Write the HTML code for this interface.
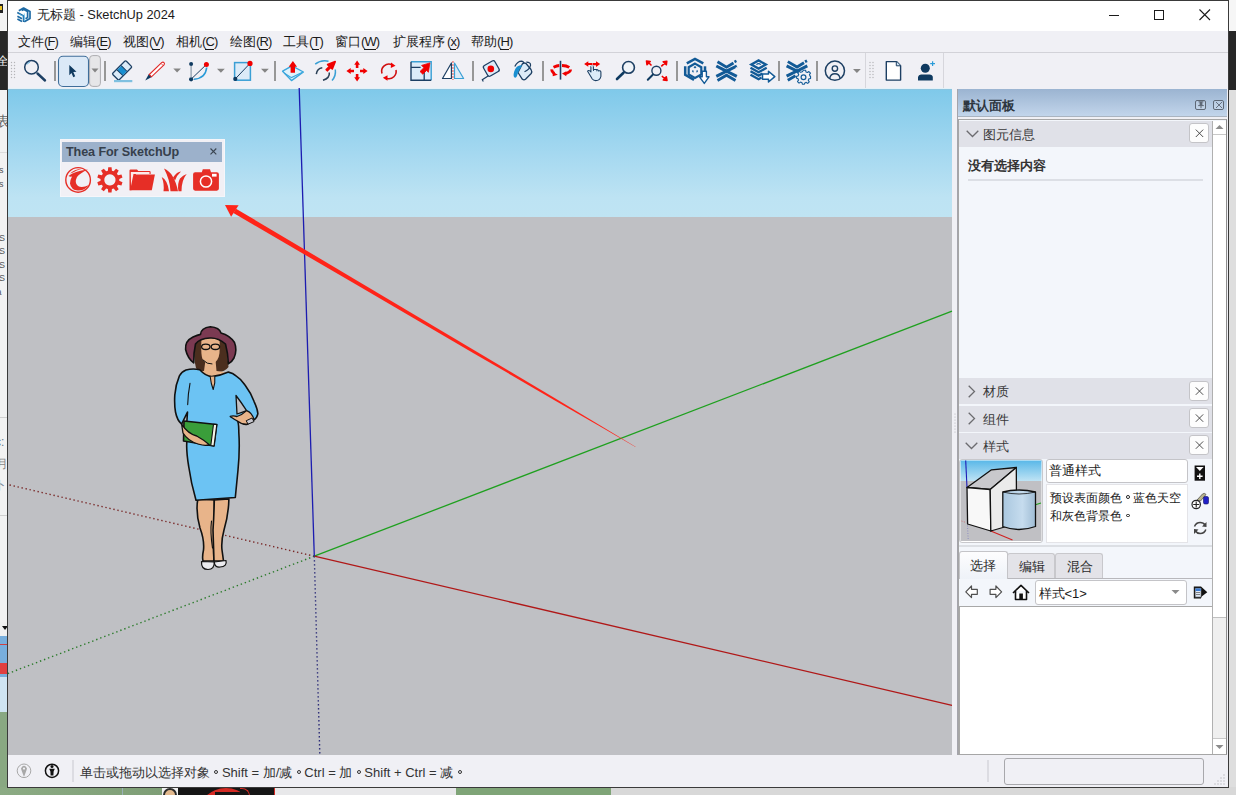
<!DOCTYPE html>
<html><head><meta charset="utf-8">
<style>
*{margin:0;padding:0;box-sizing:border-box}
html,body{width:1236px;height:795px;overflow:hidden;background:#d9d9d9;font-family:"Liberation Sans",sans-serif;color:#000;position:relative}
.a{position:absolute}
.t{position:absolute;white-space:nowrap;line-height:1}
svg{position:absolute;overflow:visible}
.menu{position:absolute;top:34px;font-size:13px;color:#1b1b1b;white-space:nowrap;line-height:15px}
.menu i{font-style:normal;letter-spacing:-0.9px}
.menu u{text-decoration:none;border-bottom:1px solid #1b1b1b}
.o{display:inline-block;width:0.92em;height:1em;position:relative;vertical-align:-0.12em}
.o:after{content:"";position:absolute;left:0.34em;top:0.34em;width:0.31em;height:0.31em;border:1px solid currentColor;border-radius:50%;box-sizing:border-box}
.sep{position:absolute;top:61px;width:2px;height:20px;background:#8c8c8c}
.dd{position:absolute;top:68px;width:0;height:0;border-left:4px solid transparent;border-right:4px solid transparent;border-top:5px solid #8a8a8a}
.hdr{position:absolute;left:959px;width:253px;height:26px;background:#e0e1e8}
.hdr .tx{position:absolute;left:24px;top:7px;font-size:12.7px;color:#383838;line-height:15px}
.cbtn{position:absolute;left:1189px;width:20px;height:20px;background:#fdfdfd;border:1px solid #c4c4c8;border-radius:3px}
</style></head>
<body>
<!-- desktop left strip -->
<div class="a" style="left:0;top:0;width:8px;height:31px;background:#f2f2f2"></div>
<div class="a" style="left:0;top:31px;width:8px;height:59px;background:#272727"></div>
<div class="a" style="left:0;top:90px;width:8px;height:546px;background:#f2f2f2"></div>
<div class="a" style="left:0;top:636px;width:8px;height:41px;background:#78aedc"></div>
<div class="a" style="left:0;top:677px;width:8px;height:35px;background:#cfe4f2"></div>
<div class="a" style="left:0;top:712px;width:8px;height:83px;background:#89a882"></div>
<div class="t" style="left:-3px;top:55px;font-size:12px;color:#f0f0f0">全</div>
<div class="t" style="left:-4px;top:114px;font-size:14px;color:#666">表</div>
<div class="a" style="left:0;top:4px;width:3px;height:9px;background:#222"></div>
<div class="a" style="left:0;top:6px;width:2px;height:4px;background:#e8c020"></div>
<div class="a" style="left:0;top:152px;width:7px;height:1px;background:#dcdcdc"></div>
<div class="t" style="left:-6px;top:164px;font-size:9px;color:#555;line-height:13.5px">es<br>ns<br><br>r.<br>ll<br>3S<br>3S<br>3S<br>3S<br>ta</div>
<div class="a" style="left:0;top:417px;width:7px;height:1px;background:#d0d0d0"></div>
<div class="a" style="left:0;top:515px;width:7px;height:1px;background:#d0d0d0"></div>
<div class="t" style="left:-5px;top:436px;font-size:12px;color:#6a7a8a">c:</div>
<div class="t" style="left:-4px;top:458px;font-size:12px;color:#888">月</div>
<div class="t" style="left:-6px;top:478px;font-size:13px;color:#7a8a9a">ト</div>
<div class="a" style="left:0;top:644px;width:7px;height:1px;background:#d04040"></div>
<div class="a" style="left:0;top:663px;width:7px;height:11px;background:#e04040"></div>
<div class="a" style="left:0;top:622px;width:7px;height:14px;background:#f0f0f0"></div>
<div class="a" style="left:2px;top:626px;width:0;height:0;border-left:3px solid transparent;border-right:3px solid transparent;border-top:4px solid #111"></div>
<div class="a" style="left:1228px;top:5px;width:6px;height:10px;border-left:1px solid #333;border-bottom:1px solid #333"></div>
<div class="t" style="left:1229px;top:58px;font-size:12px;color:#888;transform:rotate(90deg)">组</div>
<!-- desktop right strip -->
<div class="a" style="left:1228px;top:0;width:8px;height:31px;background:#f6f6f6"></div>
<div class="a" style="left:1228px;top:31px;width:8px;height:59px;background:#272727"></div>
<div class="a" style="left:1228px;top:90px;width:8px;height:705px;background:#dedede"></div>
<!-- desktop bottom strip -->
<div class="a" style="left:0;top:787px;width:1236px;height:8px;background:#d8d8d8"></div>
<div class="a" style="left:0;top:787px;width:162px;height:8px;background:linear-gradient(90deg,#8cab84,#7e9e76)"></div>
<div class="a" style="left:122px;top:787px;width:1px;height:8px;background:#9ab0b8"></div>
<div class="a" style="left:162px;top:787px;width:16px;height:8px;background:#f0f0f0"></div>
<div class="a" style="left:163px;top:788px;width:14px;height:12px;background:#e2b98e;border:2px solid #2a2a2a;border-radius:7px 7px 0 0"></div>
<div class="a" style="left:178px;top:787px;width:97px;height:8px;background:#151515"></div>
<div class="a" style="left:197px;top:788px;width:58px;height:30px;border-radius:29px 29px 0 0;background:#d42a24"></div>
<div class="a" style="left:215px;top:792px;width:34px;height:10px;background:#151515;border-radius:0 15px 0 0"></div>
<div class="a" style="left:240px;top:788px;width:10px;height:8px;background:#151515;border-radius:0 10px 0 0;border-right:1.5px solid #d42a24;border-top:1.5px solid #d42a24"></div>
<div class="a" style="left:274px;top:787px;width:2px;height:8px;background:#d42a24"></div>
<div class="a" style="left:275px;top:787px;width:181px;height:8px;background:#e8e8ea"></div>
<div class="a" style="left:456px;top:787px;width:155px;height:8px;background:#7fa477"></div>

<!-- window frame -->
<div class="a" style="left:7px;top:0;width:1222px;height:788px;border:1px solid #3a3a3a;background:#f0f0f5"></div>
<!-- title bar -->
<div class="a" style="left:8px;top:1px;width:1220px;height:30px;background:#fff"></div>
<svg style="left:16px;top:6px" width="16" height="17" viewBox="16 6 16 17">
<g fill="none" stroke="#1e6aa4" stroke-width="1.7" stroke-linejoin="round">
<path d="M18.8 10.8 L23.6 8 L30 11.6 L30 18.4 L24.3 21.8"/>
<path d="M21.6 10.4 L24 9.4 L27.6 11.6 L27.6 17.6 L25.5 18.8"/>
<path d="M17.3 12.6 L23.6 16 L23.6 22"/>
<path d="M17.4 16.3 L22 18.8 M17.4 19 L22 21.4"/>
</g>
<path d="M24.3 13.5 L24.3 21 M18.8 14 L23 16.2" stroke="#6cc4ee" stroke-width="0.9"/>
</svg>
<div class="t" style="left:37px;top:9px;font-size:12.8px;color:#1b1b1b">无标题 - SketchUp 2024</div>
<!-- window controls -->
<div class="a" style="left:1109px;top:15px;width:10px;height:1px;background:#1b1b1b"></div>
<div class="a" style="left:1154px;top:10px;width:10px;height:10px;border:1px solid #1b1b1b"></div>
<svg style="left:1199px;top:9px" width="12" height="12" viewBox="0 0 12 12"><path d="M0.5 0.5 L11 11 M11 0.5 L0.5 11" stroke="#1b1b1b" stroke-width="1.1"/></svg>

<!-- menu bar -->
<div class="a" style="left:8px;top:31px;width:1220px;height:21px;background:#f0f0f5"></div>
<div class="a" style="left:8px;top:51.5px;width:1220px;height:1.5px;background:#d2d2d8"></div>
<div class="menu" style="left:18px">文件<i>(<u>F</u>)</i></div>
<div class="menu" style="left:70px">编辑<i>(<u>E</u>)</i></div>
<div class="menu" style="left:123px">视图<i>(<u>V</u>)</i></div>
<div class="menu" style="left:176px">相机<i>(<u>C</u>)</i></div>
<div class="menu" style="left:230px">绘图<i>(<u>R</u>)</i></div>
<div class="menu" style="left:283px">工具<i>(<u>T</u>)</i></div>
<div class="menu" style="left:335px">窗口<i>(<u>W</u>)</i></div>
<div class="menu" style="left:393px">扩展程序<i style="margin-left:2px">(<u>x</u>)</i></div>
<div class="menu" style="left:471px">帮助<i>(<u>H</u>)</i></div>

<!-- toolbar -->
<svg style="left:0;top:0" width="1236" height="100" viewBox="0 0 1236 100">
<defs>
<g id="dots"><circle cx="0" cy="0" r="0.7"/><circle cx="3" cy="0" r="0.7"/><circle cx="0" cy="3" r="0.7"/><circle cx="3" cy="3" r="0.7"/><circle cx="0" cy="6" r="0.7"/><circle cx="3" cy="6" r="0.7"/><circle cx="0" cy="9" r="0.7"/><circle cx="3" cy="9" r="0.7"/><circle cx="0" cy="12" r="0.7"/><circle cx="3" cy="12" r="0.7"/><circle cx="0" cy="15" r="0.7"/><circle cx="3" cy="15" r="0.7"/></g>
</defs>
<g fill="#b4b4b8"><use href="#dots" x="11.5" y="62.5"/><use href="#dots" x="870" y="62.5"/></g>
<!-- separators -->
<g fill="#979797">
<rect x="54" y="61" width="2" height="20"/><rect x="104" y="61" width="2" height="20"/>
<rect x="274" y="61" width="2" height="20"/><rect x="472" y="61" width="2" height="20"/>
<rect x="542" y="61" width="2" height="20"/><rect x="676" y="61" width="2" height="20"/>
<rect x="778" y="61" width="2" height="20"/><rect x="816" y="61" width="2" height="20"/>
</g>
<rect x="865" y="53" width="1" height="35" fill="#d6d6dc"/>
<rect x="943" y="53" width="1" height="35" fill="#d6d6dc"/>
<!-- dropdown triangles -->
<g fill="#858585">
<path d="M91.5 68.5 L98.5 68.5 L95 72.5 Z"/>
<path d="M173.3 68.6 L180.9 68.6 L177.1 72.6 Z"/>
<path d="M217 68.8 L224.8 68.8 L220.9 72.8 Z"/>
<path d="M261 68.8 L268.8 68.8 L264.9 72.8 Z"/>
<path d="M853 68.9 L860.8 68.9 L856.9 72.9 Z"/>
</g>
<!-- magnifier -->
<circle cx="31.5" cy="67.2" r="6.8" fill="none" stroke="#1d3f63" stroke-width="1.5"/>
<path d="M27 64.5 A5 5 0 0 1 30 62" fill="none" stroke="#5ab0e0" stroke-width="1"/>
<path d="M37.5 73.5 L45 80.5" stroke="#1d3f63" stroke-width="2.4" stroke-linecap="round"/>
<!-- select button -->
<rect x="58.5" y="56.3" width="30" height="30.2" rx="4.5" fill="#dbe9f7" stroke="#3f6e9a" stroke-width="1.1"/>
<rect x="89.6" y="55.6" width="10.8" height="30.8" rx="3.2" fill="#e6e6e8" stroke="#adadb0" stroke-width="1"/>
<path d="M91.5 68.5 L98.5 68.5 L95 72.5 Z" fill="#858585"/>
<path d="M69.3 65 L76.5 71.8 L73.3 72.1 L75.2 76.3 L73.3 77.2 L71.5 73.1 L69.3 75.3 Z" fill="#0f3a60"/>
<!-- eraser -->
<g transform="translate(122.1 70.4) rotate(45)">
<rect x="-4.6" y="-9.5" width="9.2" height="19" rx="1.2" fill="#dcebf8" stroke="#1d3f63" stroke-width="1.3"/>
<rect x="-3.9" y="-2.8" width="7.8" height="6" fill="#1a8fd0"/>
<path d="M-4 -2.8 L4 -2.8 M-4 3.2 L4 3.2" stroke="#1d3f63" stroke-width="1"/>
</g>
<rect x="114" y="80" width="18.3" height="2.2" fill="#7fc0e0"/>
<!-- pencil -->
<path d="M145.2 80.6 L148.9 74 L151.8 76.9 Z" fill="#0f3a60"/>
<path d="M149.3 74.5 L161.6 62.6 Q163 61.6 164 62.6 Q165 63.6 164 65 L151.5 76.8 Z" fill="#fff" stroke="#e02828" stroke-width="1.1"/>
<path d="M161 63.4 L163.2 65.6" stroke="#e02828" stroke-width="0.8"/>
<!-- arc tool -->
<path d="M191.1 66 L191.1 77" stroke="#8898aa" stroke-width="1.2"/>
<path d="M191.1 79.2 L206.4 64.5" stroke="#1d3f63" stroke-width="1"/>
<path d="M194 79.2 Q205.5 78.5 206.7 67.5" fill="none" stroke="#2a9bd8" stroke-width="1.6"/>
<circle cx="191.1" cy="63.9" r="2" fill="#0f3a60"/>
<circle cx="191.1" cy="79.3" r="2.1" fill="#0f3a60"/>
<circle cx="206.4" cy="64.5" r="2.5" fill="#f00000"/>
<!-- rectangle tool -->
<rect x="234.6" y="62.6" width="15.8" height="17.6" fill="#dcebf8" stroke="#3a9fd5" stroke-width="1.5"/>
<path d="M235.3 78.9 L250 63.4" stroke="#1d3f63" stroke-width="1"/>
<circle cx="235.3" cy="78.9" r="2.1" fill="#0f3a60"/>
<circle cx="250" cy="63.4" r="2.6" fill="#f00000"/>
<!-- push pull -->
<path d="M282.6 71.2 L292 65.8 L303.4 72 L291.5 80.6 Z" fill="#dff2fc" stroke="#3aa6dc" stroke-width="1.4" stroke-linejoin="round"/>
<path d="M284.4 73.2 L291.5 77.6 L302 72.6" fill="none" stroke="#3aa6dc" stroke-width="1.1"/>
<path d="M290.6 72.7 L290.6 66.8 L288.7 66.8 L292.9 61 L297 66.8 L295 66.8 L295 72.7 Z" fill="#f00000"/>
<!-- follow me -->
<path d="M315.2 64.2 Q321 59.5 328.5 61.2" fill="none" stroke="#3aa0d5" stroke-width="1.5"/>
<path d="M335.3 69.5 Q336.2 76 332 80.4" fill="none" stroke="#3aa0d5" stroke-width="1.5"/>
<path d="M316.3 74.1 Q317 68.5 322.3 67.8" fill="none" stroke="#2a3f55" stroke-width="1.5"/>
<path d="M329.3 72.5 Q330 78 323 80.3" fill="none" stroke="#2a3f55" stroke-width="1.5"/>
<path d="M326.2 69.6 L329.6 66.4 L327.6 64.6 L335.2 61.6 L332.3 69 L330.6 67.4 L327.4 70.8 Z" fill="#f00000" stroke="#f00000" stroke-width="1.6" stroke-linejoin="round"/>
<!-- move -->
<g fill="#f00000">
<path d="M357.1 60.4 L360 64.7 L358.4 64.7 L358.4 68 L355.8 68 L355.8 64.7 L354.2 64.7 Z"/>
<path d="M357.1 81.6 L360 77.3 L358.4 77.3 L358.4 74 L355.8 74 L355.8 77.3 L354.2 77.3 Z"/>
<path d="M346.4 71 L350.7 68.1 L350.7 69.7 L354 69.7 L354 72.3 L350.7 72.3 L350.7 73.9 Z"/>
<path d="M367.6 71 L363.3 68.1 L363.3 69.7 L360 69.7 L360 72.3 L363.3 72.3 L363.3 73.9 Z"/>
</g>
<!-- rotate -->
<path d="M382 73.5 A7.3 7.3 0 0 1 392 64.7" fill="none" stroke="#d01010" stroke-width="1.6"/>
<path d="M396 70 A7.3 7.3 0 0 1 387 78.5" fill="none" stroke="#d01010" stroke-width="1.6"/>
<path d="M391 62.5 L395.5 65.7 L390.8 68 Z" fill="#f00000"/>
<path d="M387.5 75.3 L382.9 77.7 L387.5 80.7 Z" fill="#f00000"/>
<!-- scale -->
<rect x="411" y="61.7" width="20.2" height="18.5" fill="#dcebf8"/>
<path d="M411 61.7 L431.2 61.7 L431.2 80.2" fill="none" stroke="#3aa0d5" stroke-width="1.4"/>
<path d="M411 61.7 L411 80.2 L431.2 80.2" fill="none" stroke="#1d3f63" stroke-width="1.4"/>
<path d="M411 67.4 L420.6 67.4 M424.2 71.5 L424.2 80.2" fill="none" stroke="#1d3f63" stroke-width="1.3"/>
<path d="M429.9 62.9 L421.6 65.4 L423.9 67.7 L420 71.5 L422.8 74.2 L426.6 70.4 L428.4 72.3 Z" fill="#f00000" stroke="#f00000" stroke-width="0.8" stroke-linejoin="round"/>
<!-- flip -->
<path d="M442.5 78.5 L451.4 63 L451.4 78.5 Z" fill="#fff" stroke="#1d3f63" stroke-width="1.2" stroke-linejoin="round"/>
<path d="M454.5 63 L463.6 78.5 L454.5 78.5 Z" fill="#dcebf8" stroke="#3aa0d5" stroke-width="1.2" stroke-linejoin="round"/>
<path d="M452.9 61 L452.9 80" stroke="#e89494" stroke-width="1.8" stroke-dasharray="2 1"/>
<!-- tape -->
<g transform="translate(491.3 68.5) rotate(-30)">
<rect x="-6.5" y="-6" width="13" height="12" rx="2" fill="#dcebf8" stroke="#1d3f63" stroke-width="1.3"/>
</g>
<circle cx="490.8" cy="68.9" r="3.3" fill="#f00000"/>
<path d="M488.5 75.8 L482.3 79.7 L483.3 81.5" fill="none" stroke="#1d3f63" stroke-width="1.2"/>
<!-- paint bucket -->
<path d="M518 72.5 L522.3 64 Q524 62.3 526 63.5 L531 69.5 Q532.5 71.8 531.2 73.5 L525.5 79.3 Q524 80.6 522.4 79.3 Z" fill="#dcebf8" stroke="#1d3f63" stroke-width="1.3" stroke-linejoin="round"/>
<path d="M514.8 66.5 Q517.5 61.2 521.7 61.2 Q524.3 61.6 523.3 63.8" fill="none" stroke="#1d3f63" stroke-width="1.3"/>
<path d="M524.5 71.8 Q529.5 69.8 530.6 65.2 Q530.6 62.2 526.3 62.2" fill="none" stroke="#1d3f63" stroke-width="1.2"/>
<path d="M522.3 65.4 Q516.5 64.5 514.2 71.5 Q512.8 76.5 514.6 77.6 Q516.6 78.3 517.8 73.5 Q519.5 68.5 522.3 65.4 Z" fill="#1a8fd0"/>
<!-- orbit -->
<path d="M553.5 67.3 Q557 65.6 559.3 65.5 M562 65.5 Q566.5 65.6 569.3 67.4" fill="none" stroke="#f00000" stroke-width="2.8"/>
<path d="M551.8 69.4 Q551.6 72 554.5 73.4" fill="none" stroke="#f00000" stroke-width="2.8"/>
<path d="M570.6 69.6 Q570.6 72.3 565 73.8" fill="none" stroke="#f00000" stroke-width="2.8"/>
<path d="M552.5 71.5 L557.8 74.8 L552.8 76.3 Z" fill="#f00000"/>
<path d="M566.3 71.3 L562 73.6 L566.3 76.3 Z" fill="#f00000"/>
<path d="M560.5 60.8 L560.5 79.6" stroke="#1d3f63" stroke-width="1.6"/>
<!-- pan -->
<path d="M584.1 64 L588.3 61.2 L588.3 62.9 L592.2 62.9 L592.2 65.1 L588.3 65.1 L588.3 66.8 Z" fill="#f00000"/>
<path d="M600.2 64.1 L596 61.3 L596 63 L592.6 63 L592.6 65.2 L596 65.2 L596 66.9 Z" fill="#f00000"/>
<path d="M590.9 66.3 L590.9 72 L589.9 70.9 Q588.3 69.9 587.6 71.2 L592.3 79 Q593.5 80.6 595.6 80.6 Q600 80.6 600.9 76.5 L600.9 71.8 Q600.5 70.6 599.4 70.8 L598.4 70.9 Q598 69.4 596.8 69.5 L593.4 69.5 L593.4 66.3 Z" fill="#dcebf8" stroke="#1d3f63" stroke-width="1.1" stroke-linejoin="round"/>
<path d="M590.9 66.3 L593.4 66.3" stroke="#dcebf8" stroke-width="1"/>
<path d="M593.5 69.5 L593.5 71 M596.8 69.6 L596.8 71.3" stroke="#1d3f63" stroke-width="0.9"/>
<!-- zoom -->
<circle cx="628.5" cy="67.4" r="5.9" fill="#f0f4f8" stroke="#1d3f63" stroke-width="1.6"/>
<path d="M623.5 72.7 L617 79" stroke="#0f3a60" stroke-width="2.6" stroke-linecap="round"/>
<!-- zoom extents -->
<circle cx="656.4" cy="70.8" r="4.5" fill="none" stroke="#1d3f63" stroke-width="1.4"/>
<path d="M653 74.5 L647.8 79.7" stroke="#0f3a60" stroke-width="2" stroke-linecap="round"/>
<g fill="#f00000" stroke="#f00000" stroke-width="1.6" stroke-linejoin="round">
<path d="M651.5 65.5 L648.5 62.5 M646.5 61 L650.2 61.5 L647 64.7 Z"/>
<path d="M661.3 66.4 L664.5 63.4 M666.8 61.2 L663.2 61.7 L666.3 64.8 Z"/>
<path d="M661.9 76 L665 79 M667 80.5 L666.3 76.9 L663.3 80 Z"/>
</g>
<!-- 3D warehouse -->
<g fill="none" stroke="#125a96" stroke-width="2.5" stroke-linejoin="miter">
<path d="M686.8 63.3 L695 58.8 L703.3 63.3"/>
<path d="M685.2 66.3 L685.2 74.8 L694 79.8"/>
<path d="M705 66.3 L705 71.5"/>
</g>
<path d="M695 63.6 L701.3 67.2 L701.3 74.4 L695 78 L688.7 74.4 L688.7 67.2 Z" fill="none" stroke="#125a96" stroke-width="2.2"/>
<g fill="#125a96"><path d="M695 66 L696.5 67.2 L695 68.4 L693.5 67.2 Z"/><path d="M692.2 70.2 L693.6 70.6 L693.6 72.4 L692.2 72 Z"/><path d="M697.8 70.2 L696.4 70.6 L696.4 72.4 L697.8 72 Z"/></g>
<path d="M702.2 71.3 L706.4 71.3 L706.4 76.8 L709 76.8 L704.3 83.4 L699.5 76.8 L702.2 76.8 Z" fill="#fff" stroke="#125a96" stroke-width="1.4" stroke-linejoin="round"/>
<!-- extension warehouse -->
<g fill="none" stroke="#125a96" stroke-linejoin="miter">
<path d="M717.5 61.8 L726.5 67.2 L733.5 63" stroke-width="2.8"/>
<path d="M734.5 62 L736.5 61" stroke-width="2.8"/>
<path d="M716.3 66 L726.5 71.2 L736.8 66" stroke-width="3"/>
<path d="M716.3 76.4 L726.5 71.2 L736.8 76.4" stroke-width="3"/>
<path d="M717.5 80.5 L726.5 75.2 L735.5 80.5" stroke-width="2.8"/>
</g>
<path d="M734.8 63.8 L737 62.5 M735.5 68 L737 67.2" stroke="#f0f0f5" stroke-width="0.8"/>
<!-- layout -->
<g fill="none" stroke="#125a96" stroke-width="2.3" stroke-linejoin="miter">
<path d="M751.3 64.6 L758.6 60.4 L765.9 64.6 L758.6 68.6 Z"/>
<path d="M750.5 67.8 L758.6 72.2 L766.7 67.8"/>
<path d="M750.5 71.3 L758.6 75.6 L762.5 73.6"/>
<path d="M750.5 74.8 L758.6 79.2 L761.5 77.6"/>
</g>
<path d="M756.4 64.6 Q758.6 62.6 760.8 64.6" fill="none" stroke="#125a96" stroke-width="1.2"/>
<path d="M762.5 74 L768.5 74 L768.5 71.2 L774.8 76.6 L768.5 82 L768.5 79.2 L762.5 79.2 Z" fill="#fff" stroke="#125a96" stroke-width="1.5" stroke-linejoin="round"/>
<!-- extension manager -->
<g fill="none" stroke="#125a96" stroke-linejoin="miter">
<path d="M787.8 61.6 L797 67 L804 62.8" stroke-width="2.8"/>
<path d="M805 61.8 L807 60.8" stroke-width="2.8"/>
<path d="M786.6 65.8 L797 71 L807.3 65.8" stroke-width="3"/>
<path d="M786.6 76.2 L797 71 L799.5 72.3" stroke-width="3"/>
<path d="M787.8 80.3 L795.5 75.8" stroke-width="2.8"/>
</g>
<g transform="translate(803.5 77.3)">
<path d="M-1.2 -6.6 L1.2 -6.6 L1.6 -4.7 L3.2 -4.1 L4.8 -5.2 L6.5 -3.5 L5.4 -1.9 L6 -0.3 L6.6 0.2 L6.6 2.4 L4.7 2.8 L4.1 4.4 L5.2 6 L3.5 7.7 L1.9 6.6 L0.3 7.2 L-0.1 8.6 L-2.3 8.6 L-2.7 6.9 L-4.3 6.3 L-5.9 7.4 L-7.6 5.7 L-6.5 4.1 L-7.1 2.5 L-8.6 2.1 L-8.6 -0.1 L-6.9 -0.5 L-6.3 -2.1 L-7.4 -3.7 L-5.7 -5.4 L-4.1 -4.3 L-2.5 -4.9 Z" transform="translate(1 -1) scale(0.92)" fill="#f0f0f5" stroke="#125a96" stroke-width="1.2" stroke-linejoin="round"/>
<circle cx="0" cy="0" r="2.4" fill="none" stroke="#125a96" stroke-width="1.2"/>
</g>
<!-- profile -->
<circle cx="834.9" cy="70.7" r="9.6" fill="none" stroke="#1d3f63" stroke-width="1.5"/>
<circle cx="834.9" cy="68.6" r="2.7" fill="none" stroke="#1d3f63" stroke-width="1.4"/>
<path d="M829.7 78.5 Q830.5 73.8 834.9 73.8 Q839.3 73.8 840.1 78.5" fill="none" stroke="#1d3f63" stroke-width="1.4"/>
<!-- doc -->
<path d="M886.3 61.6 L896.5 61.6 L900.6 65.7 L900.6 80.1 L886.3 80.1 Z" fill="#fff" stroke="#1d3f63" stroke-width="1.4" stroke-linejoin="round"/>
<path d="M896.3 61.6 L896.3 65.8 L900.6 65.8" fill="#cfe3f3" stroke="#1d3f63" stroke-width="1"/>
<!-- add person -->
<circle cx="925.3" cy="68.3" r="4.5" fill="#0f3a60"/>
<path d="M918 80.5 L918 77 Q918.5 74.4 921 74.4 L929.5 74.4 Q932.5 74.4 932.8 77 L932.8 80.5 Z" fill="#0f3a60"/>
<path d="M932.6 61.3 L932.6 66.1 M930.2 63.7 L935 63.7" stroke="#2a9bd8" stroke-width="1.2"/>
</svg>


<!-- viewport -->
<div class="a" style="left:8px;top:88px;width:944px;height:667px;background:#bfc0c4;overflow:hidden">
  <div class="a" style="left:0;top:0;width:944px;height:129px;background:linear-gradient(#7fc9ea 1%,#a4d8f0 50%,#bde3f3 85%,#bfe4f3)"></div>
  <div class="a" style="left:0;top:0;width:944px;height:1px;background:#e4f1f8"></div>
  <div class="a" style="left:0;top:1px;width:944px;height:1px;background:#8cc4de"></div>
</div>
<svg style="left:8px;top:88px" width="944" height="667" viewBox="8 88 944 667">
<!-- dotted axes -->
<path d="M314.3 556.2 L8 484.6" stroke="#7a2a2a" stroke-width="1.4" stroke-dasharray="1.4 2.7"/>
<path d="M314.3 556.2 L8 673.5" stroke="#2a7a2a" stroke-width="1.4" stroke-dasharray="1.4 2.9"/>
<path d="M314.3 556.2 L319.8 755" stroke="#1c1c70" stroke-width="1.4" stroke-dasharray="1.3 2.7"/>
<!-- solid axes -->
<path d="M314.3 556.2 L952 311.2" stroke="#1fa01f" stroke-width="1.3"/>
<path d="M314.3 556.2 L952 705.3" stroke="#b01818" stroke-width="1.3"/>
<path d="M314.3 556.2 L299.2 88" stroke="#1c1cb0" stroke-width="1.3"/>
<!-- red arrow -->
<path d="M233.43 213.00 L353.93 283.36 L474.44 353.67 L554.88 400.39 L603.21 428.31 L635.45 446.89 L635.55 446.71 L603.66 427.54 L555.80 398.83 L475.92 351.17 L355.95 279.91 L235.97 208.70 Z" fill="#ff2419"/>
<path d="M225 205.1 L238.6 205.2 L231.1 216.7 Z" fill="#ff2419"/>
</svg>

<!-- Thea toolbar -->
<div class="a" style="left:60px;top:139px;width:165px;height:58px;background:#f1f0f5;border:1px solid #f6f6fa"></div>
<div class="a" style="left:62px;top:142px;width:160px;height:20px;background:#9cb1cb"></div>
<div class="t" style="left:66px;top:145.5px;font-size:12.6px;font-weight:bold;color:#36404c;letter-spacing:-0.1px">Thea For SketchUp</div>
<svg style="left:0;top:0" width="240" height="200" viewBox="0 0 240 200">
<path d="M210.5 148.5 L216.3 154.3 M216.3 148.5 L210.5 154.3" stroke="#3a4450" stroke-width="1.1"/>
<g fill="#e62e26">
<circle cx="78.1" cy="179.9" r="12.3" fill="none" stroke="#e62e26" stroke-width="1.4"/>
<path d="M68.5 176 Q74 171 88 169.5 Q80 173 77 177 Q74 183 78 186 Q82 188.5 89 185 Q85 190.5 78 190.5 Q71 190 70 183.5 Q70 180 72 176.5 Q70 177 68.5 176 Z"/>
<path d="M70 173.5 Q74 169.5 82 168.8 Q76 170.3 73 172.5 Z" />
</g>
<g transform="translate(109.9 179.9)" fill="#e62e26"><path d="M-2.03 -9.18 L-1.67 -12.69 L1.67 -12.69 L2.03 -9.18 L3.75 -8.62 L6.11 -11.25 L8.81 -9.28 L7.04 -6.23 L8.10 -4.77 L11.55 -5.51 L12.59 -2.33 L9.36 -0.90 L9.36 0.90 L12.59 2.33 L11.55 5.51 L8.10 4.77 L7.04 6.23 L8.81 9.28 L6.11 11.25 L3.75 8.62 L2.03 9.18 L1.67 12.69 L-1.67 12.69 L-2.03 9.18 L-3.75 8.62 L-6.11 11.25 L-8.81 9.28 L-7.04 6.23 L-8.10 4.77 L-11.55 5.51 L-12.59 2.33 L-9.36 0.90 L-9.36 -0.90 L-12.59 -2.33 L-11.55 -5.51 L-8.10 -4.77 L-7.04 -6.23 L-8.81 -9.28 L-6.11 -11.25 L-3.75 -8.62 Z M0 -5.6 A5.6 5.6 0 1 0 0.01 -5.6 Z" fill-rule="evenodd"/></g>
<g fill="#e62e26">
<path d="M129.5 170.5 Q129.5 169.4 130.6 169.4 L137 169.4 L138.3 171 L149.5 171 Q150.6 171 150.6 172.1 L150.6 174 L136 174 L131.5 190.3 L129.5 190.3 Z"/>
<path d="M133.2 174.6 L154.9 174.6 L151.8 190.3 L129.8 190.3 Z"/>
<path d="M130.8 172 L149.5 172 L149.5 174 L133.5 174 L131 186 Z" fill="#fff" opacity="0.9"/>
</g>
<g fill="#e62e26">
<path d="M164 168.6 Q174 172.5 178 191.2 L170.5 191.2 Q170 180 164 168.6 Z"/>
<path d="M161.7 177 Q167.5 180 169 191.2 L163.5 191.2 Q164.5 184 161.7 177 Z"/>
<path d="M173 177.5 Q177 171.5 181 171.5 Q177 175 175 180.5 Z"/>
<path d="M186.7 174 Q181.5 180 181.5 191.2 L178.5 191.2 Q177 184 180 178.5 Q183 175 186.7 174 Z"/>
</g>
<g>
<path d="M195.2 172.2 L201.8 172.2 L202.8 169.2 L210 169.2 L211 172.2 L216.8 172.2 Q218.9 172.2 218.9 174.3 L218.9 188.6 Q218.9 190.7 216.8 190.7 L195.2 190.7 Q193.1 190.7 193.1 188.6 L193.1 174.3 Q193.1 172.2 195.2 172.2 Z" fill="#e62e26"/>
<circle cx="206" cy="181.5" r="5.6" fill="none" stroke="#fff" stroke-width="1.5"/>
<rect x="212" y="173.8" width="4.6" height="2.8" fill="#fff"/>
</g>
</svg>

<!-- woman figure -->
<svg style="left:160px;top:320px" width="110" height="260" viewBox="160 320 110 260">
<g stroke="#111" stroke-width="1.6" stroke-linejoin="round" stroke-linecap="round">
<!-- legs -->
<path d="M197.8 499 Q195.5 512 200 528 Q204.5 540 203.5 550 Q202 557 203 561 L214 561 Q213 548 214 530 Q214.5 515 214.3 500 Z" fill="#e8b48a"/>
<path d="M214.3 500 L228.9 499 Q228.5 515 224 530 Q221 541 222 550 Q223 557 223.5 561 L214 561 Q213.5 545 213 530 Q214 515 214.3 500 Z" fill="#e8b48a"/>
<path d="M211.5 521 Q210 532 212.5 548" fill="none" stroke-width="1.1"/>
<path d="M201.5 561.5 Q201 569.5 208 569.5 Q214.5 569.5 214.3 562 Z" fill="#ebebef" stroke-width="1.2"/>
<path d="M214.3 562 Q214.5 567.5 220 567 Q227.5 566.5 226 560.5 Z" fill="#ebebef" stroke-width="1.2"/>
<!-- hair -->
<path d="M195 338 Q193 358 196 368 Q199 372.5 205 372 L216 372 Q224 373 228.5 367 Q227 354 226 338 Z" fill="#4b2e1e" stroke="none"/>
<!-- neck -->
<path d="M205.5 360 L204 371 Q199 371 198 372 Q206 378 212 378 Q222 377 229 373 Q220 371 216.5 371 L215.5 360 Z" fill="#e8b48a" stroke="none"/>
<!-- dress -->
<path d="M199.7 369.8 Q206 376.5 211.8 376.6 Q220 376 228.4 372.1 Q233 373 236 375.9 Q241 379 245 385 Q251 393 254.1 401.6 Q257.5 409 257.9 413.7 Q257 418 254.1 419.7 L247.3 424.2 Q244 425.5 240 421 Q238 419 236 418 Q239 421 238.8 432 Q240 450 238 470 Q236.5 485 235.3 497.5 L196 500.3 Q191 483 188.7 466.5 Q186 450 186.9 441 Q186 430 187.5 412 L181.6 424.2 Q177 420 175.5 412 Q174.2 404.6 174.8 395 Q175.5 385 179.4 375.9 Q182 371.5 186 370 Q193 368 199.7 369.8 Z" fill="#6cc3f3"/>
<path d="M236 395.5 Q241 402 246.6 410.6 Q242 412.5 237 414 Z" fill="#bfc0c4" stroke-width="1.3"/>
<path d="M190 383.4 Q188 394 187.7 404.6" fill="none" stroke-width="1.1"/>
<path d="M210.2 376.8 Q211 384 213.2 389.5 Q215.5 383 214.8 376.5" fill="#e8b48a" stroke-width="1.1"/>
<!-- face -->
<path d="M201.5 338 Q200.5 356 203 360 Q207 364.5 212 364 Q218.5 362 219.5 353 Q220 346 219.5 338 Z" fill="#e8b48a" stroke="none"/>
<path d="M203 360 Q207 364.5 212 364" fill="none" stroke-width="1"/>
<!-- glasses -->
<ellipse cx="205.8" cy="346.8" rx="4.2" ry="2.7" fill="#e8b48a" stroke-width="1.3"/>
<ellipse cx="215.4" cy="346.8" rx="4.2" ry="2.7" fill="#e8b48a" stroke-width="1.3"/>
<!-- hat -->
<path d="M185.6 349.5 Q184.8 341 193 337 Q197.5 335 200.5 334.4 Q201 328 210.3 326.8 Q219.5 327.5 221 333 Q230 335.5 234.5 342.5 Q237.5 350 234 358 Q231.5 362.5 228.4 363.8 Q228 353 225.5 344 Q218 337.5 210 338 Q199.5 338.5 195.5 344 Q193.5 353 193.7 363 Q187.5 358 185.6 349.5 Z" fill="#7b3a52"/>
<!-- book -->
<path d="M184 421 L216.8 424.5 L214 446 L183.5 441 Z" fill="#3a9e3a"/>
<path d="M213.5 424.3 L216.8 424.5 L214 446 L210.8 445.5 Z" fill="#f4f4e8" stroke-width="1.1"/>
<!-- hands -->
<path d="M181.6 424.2 Q188 434 196.7 436 Q204 440 209 444.6 Q206 446.5 198 444 Q188 441 183 433 Z" fill="#e8b48a" stroke-width="1.3"/>
<path d="M247.3 424.2 Q242 424.8 236.5 420.5 Q231.5 417.5 230.2 416.4 Q233 415.5 237 416.5 Q242 415 246.6 410.6 Q252 412.5 254.1 419.7 Z" fill="#e8b48a" stroke-width="1.3"/>
<path d="M246.5 420.6 L252 418 L254 421.6 L248.5 424 Z" fill="#c8c8d0" stroke-width="1"/>
</g>
</svg>


<!-- panel -->
<svg style="left:953px;top:412px" width="4" height="22" viewBox="0 0 4 22"><g fill="#b0b0b8"><circle cx="2" cy="2" r="0.6"/><circle cx="2" cy="5" r="0.6"/><circle cx="2" cy="8" r="0.6"/><circle cx="2" cy="11" r="0.6"/><circle cx="2" cy="14" r="0.6"/><circle cx="2" cy="17" r="0.6"/><circle cx="2" cy="20" r="0.6"/></g></svg>

<!-- panel -->
<div class="a" style="left:957px;top:89px;width:271px;height:666px;background:#f0f0f5;border-left:1px solid #a4a4ac"></div>
<div class="a" style="left:958px;top:89px;width:269px;height:28px;background:linear-gradient(#9bb4d1,#c2d5eb);border-bottom:1px solid #aab4c0"></div>
<div class="t" style="left:963px;top:98.7px;font-size:13.4px;font-weight:bold;color:#2e3640">默认面板</div>
<div class="a" style="left:1195px;top:99.5px;width:11px;height:10.5px;border:1px solid #5e6876;border-radius:2px;background:rgba(255,255,255,0.15)"></div>
<svg style="left:1195px;top:99px" width="12" height="12" viewBox="0 0 12 12"><path d="M3.5 2.8 L8.5 2.8 M3.2 6.6 L8.8 6.6 M6 6.6 L6 9.2" stroke="#5e6876" stroke-width="1"/><rect x="4.6" y="3" width="2.8" height="3.4" fill="#5e6876"/></svg>
<div class="a" style="left:1213px;top:99.5px;width:11px;height:10.5px;border:1px solid #5e6876;border-radius:2px;background:rgba(255,255,255,0.15)"></div>
<svg style="left:1213px;top:99px" width="12" height="12" viewBox="0 0 12 12"><path d="M3 3 L9 9 M9 3 L3 9" stroke="#5e6876" stroke-width="0.9"/></svg>
<!-- tray body -->
<div class="a" style="left:958px;top:119px;width:269px;height:636px;background:#f3f6fb;border:1px solid #a6a6a6;border-right-color:#8e8e8e"></div>
<!-- scrollbar -->
<div class="a" style="left:1212px;top:121px;width:14px;height:633px;background:#fff;border-left:1px solid #b0b0b0"></div>
<div class="a" style="left:1213px;top:617px;width:13px;height:122px;background:#efefef;border-top:1px solid #c0c0c0"></div>
<div class="a" style="left:1213px;top:134px;width:13px;height:1px;background:#c8c8c8"></div>
<div class="a" style="left:1213px;top:738px;width:13px;height:1px;background:#c8c8c8"></div>
<svg style="left:1213px;top:121px" width="13" height="13" viewBox="0 0 13 13"><path d="M2.5 8 L10.5 8 L6.5 4 Z" fill="#8c8c8c"/></svg>
<svg style="left:1213px;top:740px" width="13" height="13" viewBox="0 0 13 13"><path d="M2.5 5 L10.5 5 L6.5 9 Z" fill="#8c8c8c"/></svg>
<!-- section headers -->
<div class="hdr" style="top:121px;height:26px"><svg style="left:7px;top:9px" width="13" height="8" viewBox="0 0 13 8"><path d="M0.7 0.7 L6.5 6.5 L12.3 0.7" fill="none" stroke="#6c6c70" stroke-width="1.3"/></svg><div class="tx">图元信息</div></div>
<div class="cbtn" style="top:123px"></div>
<div class="t" style="left:968px;top:158.8px;font-size:13.4px;font-weight:bold;color:#333">没有选择内容</div>
<div class="a" style="left:968px;top:179px;width:235px;height:2px;background:#dcdfe5"></div>

<div class="hdr" style="top:378px"><svg style="left:8.5px;top:6.5px" width="8" height="13" viewBox="0 0 8 13"><path d="M0.7 0.7 L6.5 6.5 L0.7 12.3" fill="none" stroke="#6c6c70" stroke-width="1.3"/></svg><div class="tx">材质</div></div>
<div class="cbtn" style="top:381px"></div>
<div class="hdr" style="top:405.5px"><svg style="left:8.5px;top:6.5px" width="8" height="13" viewBox="0 0 8 13"><path d="M0.7 0.7 L6.5 6.5 L0.7 12.3" fill="none" stroke="#6c6c70" stroke-width="1.3"/></svg><div class="tx">组件</div></div>
<div class="cbtn" style="top:408px"></div>
<div class="hdr" style="top:432.5px"><svg style="left:6px;top:9px" width="13" height="8" viewBox="0 0 13 8"><path d="M0.7 0.7 L6.5 6.5 L12.3 0.7" fill="none" stroke="#6c6c70" stroke-width="1.3"/></svg><div class="tx">样式</div></div>
<div class="cbtn" style="top:435px"></div>
<svg style="left:1189px;top:120px" width="22" height="340" viewBox="0 0 22 340">
<g stroke="#3a3a3a" stroke-width="0.9"><path d="M6.8 9.6 L14.2 17 M14.2 9.6 L6.8 17"/>
<path d="M6.8 267.4 L14.2 274.8 M14.2 267.4 L6.8 274.8"/>
<path d="M6.8 294.4 L14.2 301.8 M14.2 294.4 L6.8 301.8"/>
<path d="M6.8 321.4 L14.2 328.8 M14.2 321.4 L6.8 328.8"/></g>
</svg>
<!-- style content -->
<div class="a" style="left:959px;top:458.5px;width:84px;height:84px;border:1px solid #c8c8cc;border-radius:3px;background:#fff"></div>
<svg style="left:960px;top:459.5px" width="82" height="82" viewBox="960 459.5 82 82">
<defs><linearGradient id="tsky" x1="0" y1="0" x2="0" y2="1"><stop offset="0" stop-color="#5ab8e8"/><stop offset="1" stop-color="#bfe3f4"/></linearGradient>
<linearGradient id="tcyl" x1="0" y1="0" x2="1" y2="0"><stop offset="0" stop-color="#a9c7df"/><stop offset="0.6" stop-color="#c6dcee"/><stop offset="1" stop-color="#9fbcd4"/></linearGradient></defs>
<rect x="960.5" y="460" width="81" height="20.5" fill="url(#tsky)"/>
<rect x="960.5" y="480.5" width="81" height="60" fill="#c0c0c4"/>
<path d="M965.7 460 L967 487" stroke="#1c1cb8" stroke-width="1.1"/>
<path d="M961.5 520.5 L966 522" stroke="#d06060" stroke-width="0.8" stroke-dasharray="1 1.5"/>
<path d="M967.5 525 L968.2 539" stroke="#8080c0" stroke-width="0.8" stroke-dasharray="1 1.5"/>
<path d="M990.8 530.5 L1012.5 539.5" stroke="#d02020" stroke-width="1.1"/>
<path d="M1035.5 504.2 L1041 502.5" stroke="#20a020" stroke-width="1.1"/>
<g stroke="#111" stroke-width="1.3" stroke-linejoin="round">
<path d="M967 487 L991.5 469.3 L1016.3 467 L990.2 489 Z" fill="#c8c8cc"/>
<path d="M967 487 L990.2 489 L990.8 530.5 L967.6 523.5 Z" fill="#f8f8f8"/>
<path d="M990.2 489 L1016.3 467 L1016.6 523 L990.8 530.5 Z" fill="#ebebeb"/>
<path d="M1002.8 491.5 Q1019 487.5 1035.5 491.5 L1035.5 526 Q1019 532 1002.8 526 Z" fill="url(#tcyl)"/>
<path d="M1002.8 491.5 Q1019 495.5 1035.5 491.5" fill="none" stroke-width="0.8"/>
</g>
</svg>

<div class="a" style="left:1046px;top:458.5px;width:142px;height:24px;background:#fff;border:1px solid #c4c4c8;border-radius:3px"></div>
<div class="t" style="left:1049px;top:463.5px;font-size:13px;color:#1a1a1a">普通样式</div>
<div class="a" style="left:1046px;top:483.5px;width:142px;height:59px;background:#fff;border:1px solid #e4e4e8"></div>
<div class="t" style="left:1050px;top:488.5px;font-size:12.2px;color:#1a1a1a;line-height:18.8px">预设表面颜色<b class="o"></b>蓝色天空<br>和灰色背景色<b class="o"></b></div>
<div class="a" style="left:959px;top:545px;width:253px;height:1.5px;background:#dcdfe4"></div>
<!-- tabs -->
<div class="a" style="left:959px;top:577.5px;width:253px;height:1px;background:#b8b8bc"></div>
<div class="a" style="left:1007px;top:553px;width:48px;height:25px;background:#e3e3e8;border:1px solid #c8c8cc;border-bottom:none;border-radius:3px 3px 0 0"></div>
<div class="a" style="left:1055px;top:553px;width:48px;height:25px;background:#e3e3e8;border:1px solid #c8c8cc;border-bottom:none;border-radius:3px 3px 0 0"></div>
<div class="a" style="left:959px;top:551px;width:49px;height:28px;background:linear-gradient(#fdfdfe,#eef2f8);border:1px solid #c4c4c8;border-bottom:none;border-radius:3px 3px 0 0"></div>
<div class="t" style="left:970px;top:559px;font-size:13px;color:#2a2a2a">选择</div>
<div class="t" style="left:1018.5px;top:560px;font-size:13px;color:#2a2a2a">编辑</div>
<div class="t" style="left:1066.5px;top:560px;font-size:13px;color:#2a2a2a">混合</div>
<!-- nav row -->
<svg style="left:960px;top:580px" width="260" height="28" viewBox="960 580 260 28">
<path d="M965.8 591.8 L971.5 586 L971.5 589.3 L977.3 589.3 L977.3 594.3 L971.5 594.3 L971.5 597.6 Z" fill="#fff" stroke="#505050" stroke-width="1.2" stroke-linejoin="round"/>
<path d="M1001.6 591.8 L995.9 586 L995.9 589.3 L990.1 589.3 L990.1 594.3 L995.9 594.3 L995.9 597.6 Z" fill="#fff" stroke="#505050" stroke-width="1.2" stroke-linejoin="round"/>
<path d="M1013 593 L1021 585.3 L1029 593 M1015.5 591 L1015.5 599.5 L1026.5 599.5 L1026.5 591" fill="#fff" stroke="#111" stroke-width="1.6" stroke-linejoin="round"/>
<rect x="1019.3" y="593.5" width="3.6" height="6" fill="#111"/>
<path d="M1193.8 586.5 L1193.8 598.5 L1201 598.5 L1201 597 L1207.3 592.2 L1201 586.5 Z" fill="#111"/>
<rect x="1195" y="588" width="6.2" height="9.2" fill="#dfe8f4" stroke="#2a2a2a" stroke-width="0.8"/>
<rect x="1195.4" y="588.4" width="5.4" height="2.6" fill="#3a7ad0"/>
<path d="M1196 592.5 L1200 592.5 M1196 594.5 L1200 594.5" stroke="#555" stroke-width="0.7"/>
</svg>
<div class="a" style="left:1034.5px;top:580px;width:152px;height:24.5px;background:#fff;border:1px solid #c4c4c8;border-radius:3px"></div>
<div class="t" style="left:1038.5px;top:587px;font-size:13px;color:#1a1a1a">样式&lt;1&gt;</div>
<svg style="left:1170px;top:588px" width="12" height="8" viewBox="0 0 12 8"><path d="M1.5 2 L9.5 2 L5.5 6 Z" fill="#8a8a8a"/></svg>
<!-- style icons -->
<svg style="left:1188px;top:460px" width="24" height="80" viewBox="1188 460 24 80">
<rect x="1194.6" y="465.5" width="10.4" height="15.2" fill="#111"/>
<path d="M1196 467 L1203.6 467 L1199.8 471 Z" fill="#fff"/>
<path d="M1199.8 473.5 L1199.8 479 M1197 476.2 L1202.6 476.2" stroke="#fff" stroke-width="1.4"/>
<path d="M1197 500 L1202.5 494 Q1204.5 492.5 1206 494.5 L1200.5 501 Z" fill="#b8b48c" stroke="#555" stroke-width="0.8"/>
<rect x="1203.5" y="496.5" width="5" height="7.5" rx="1.5" fill="#2020c8" stroke="#101060" stroke-width="0.6"/>
<circle cx="1196.2" cy="504.5" r="4.2" fill="#fff" stroke="#222" stroke-width="1.2"/>
<path d="M1196.2 501.5 L1196.2 507.5 M1193.2 504.5 L1199.2 504.5" stroke="#222" stroke-width="1.1"/>
<path d="M1194.5 526.5 Q1196 522.5 1200.2 522.5 Q1203.5 522.5 1205 525" fill="none" stroke="#444" stroke-width="1.5"/>
<path d="M1206.5 522 L1206.5 527 L1202 526.5 Z" fill="#444"/>
<path d="M1205.8 529.5 Q1204.5 533.5 1200.2 533.5 Q1197 533.5 1195.4 531" fill="none" stroke="#444" stroke-width="1.5"/>
<path d="M1194 534 L1194 529 L1198.5 529.5 Z" fill="#444"/>
</svg>
<!-- list box -->
<div class="a" style="left:959px;top:606px;width:253px;height:148px;background:#fff;border-top:1px solid #a8a8a8;border-left:1px solid #a8a8a8"></div>


<!-- status bar -->
<!-- status bar -->
<div class="a" style="left:8px;top:755px;width:1220px;height:32px;background:#f0f0f5"></div>
<svg style="left:14px;top:760px" width="50" height="22" viewBox="14 760 50 22">
<circle cx="24" cy="770.8" r="6.8" fill="none" stroke="#a8a8a8" stroke-width="1"/>
<path d="M24 777 L21.6 770.5 A2.9 2.9 0 1 1 26.4 770.5 Z" fill="#a8a8a8"/>
<circle cx="24" cy="768.6" r="1.1" fill="#f0f0f5"/>
<circle cx="52" cy="770.8" r="6.6" fill="none" stroke="#111" stroke-width="1.5"/>
<circle cx="52" cy="766.6" r="1.5" fill="#111"/>
<path d="M49.2 768.8 L54.8 768.8 L53.6 771.5 L53.4 775.6 L50.6 775.6 L50.4 771.5 Z" fill="#111"/>
</svg>
<div class="a" style="left:72px;top:760px;width:1.5px;height:22px;background:#dcdce2"></div>
<div class="t" style="left:80px;top:766px;font-size:13px;color:#333">单击或拖动以选择对象<b class="o"></b>Shift = 加/减<b class="o"></b>Ctrl = 加<b class="o"></b>Shift + Ctrl = 减<b class="o"></b></div>
<div class="a" style="left:987px;top:760px;width:1.5px;height:22px;background:#dcdce2"></div>
<div class="a" style="left:1004px;top:758px;width:200px;height:26.5px;border:1px solid #a8a8ac;border-radius:3px;background:#f0f0f5"></div>
<svg style="left:1212px;top:772px" width="16" height="15" viewBox="0 0 16 15"><g fill="#b8b8bc"><circle cx="12" cy="3" r="0.7"/><circle cx="9" cy="6" r="0.7"/><circle cx="12" cy="6" r="0.7"/><circle cx="6" cy="9" r="0.7"/><circle cx="9" cy="9" r="0.7"/><circle cx="12" cy="9" r="0.7"/><circle cx="3" cy="12" r="0.7"/><circle cx="6" cy="12" r="0.7"/><circle cx="9" cy="12" r="0.7"/><circle cx="12" cy="12" r="0.7"/></g></svg>

</body></html>
